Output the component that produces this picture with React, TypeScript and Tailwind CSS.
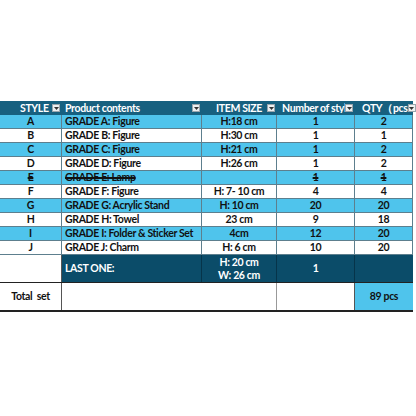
import React from "react";

const GRID = "grid grid-cols-[62px_140px_75px_78px_58px]";

function Drop() {
  return (
    <span className="ml-auto mr-[2px] flex h-[8px] w-[8px] shrink-0 items-center justify-center border border-[#9aa6ad] bg-[#eef0f1]">
      <svg width="5" height="3" viewBox="0 0 5 3">
        <path d="M0 0 L5 0 L2.5 3 Z" fill="#333" />
      </svg>
    </span>
  );
}

type Row = { s: string; p: string; i: string; n: string; q: string; blue: boolean; strike?: boolean };

const rows: Row[] = [
  { s: "A", p: "GRADE A: Figure", i: "H:18 cm", n: "1", q: "2", blue: true },
  { s: "B", p: "GRADE B: Figure", i: "H:30 cm", n: "1", q: "1", blue: false },
  { s: "C", p: "GRADE C: Figure", i: "H:21 cm", n: "1", q: "2", blue: true },
  { s: "D", p: "GRADE D: Figure", i: "H:26 cm", n: "1", q: "2", blue: false },
  { s: "E", p: "GRADE E: Lamp", i: "", n: "1", q: "1", blue: true, strike: true },
  { s: "F", p: "GRADE F: Figure", i: "H: 7- 10 cm", n: "4", q: "4", blue: false },
  { s: "G", p: "GRADE G: Acrylic Stand", i: "H: 10 cm", n: "20", q: "20", blue: true },
  { s: "H", p: "GRADE H: Towel", i: "23 cm", n: "9", q: "18", blue: false },
  { s: "I", p: "GRADE I: Folder & Sticker Set", i: "4cm", n: "12", q: "20", blue: true },
  { s: "J", p: "GRADE J: Charm", i: "H: 6 cm", n: "10", q: "20", blue: false },
];

export default function App() {
  const font = { fontFamily: "Lato, 'Liberation Sans', sans-serif" };
  return (
    <div className="h-[416px] w-[416px] bg-white pt-[101px]" style={font}>
      <div className="w-[413px] text-[10.5px] font-bold leading-none tracking-[-0.35px] text-[#111]">
        {/* header */}
        <div className={`${GRID} h-[14px] bg-[#17607f] text-white`}>
          <div className="flex items-center pl-[20px]">STYLE<Drop /></div>
          <div className="flex items-center pl-[3px]">Product contents<Drop /></div>
          <div className="flex items-center pl-[14px]">ITEM SIZE<Drop /></div>
          <div className="flex items-center overflow-hidden pl-[5px]"><span className="overflow-hidden whitespace-nowrap">Number of styl</span><Drop /></div>
          <div className="flex items-center pl-[7px] whitespace-nowrap">QTY（pcs<Drop /></div>
        </div>
        {rows.map((r) => {
          const bg = r.blue ? "bg-[#4fc4ec]" : "bg-white";
          const st = r.strike ? "line-through decoration-[1.5px]" : "";
          const cell = `flex items-center h-[14px] border-b border-[#5d7f8e] border-r ${bg}`;
          return (
            <div key={r.s} className={GRID}>
              <div className={`${cell} justify-center ${st}`}>{r.s}</div>
              <div className={`${cell} pl-[3px] ${st}`}>{r.p}</div>
              <div className={`${cell} justify-center`}>{r.i}</div>
              <div className={`${cell} justify-center ${st}`}>{r.n}</div>
              <div className={`${cell} justify-center ${st}`}>{r.q}</div>
            </div>
          );
        })}
        {/* last one */}
        <div className={`${GRID} h-[27px]`}>
          <div className="border-r border-[#555] bg-white" />
          <div className="flex items-center border-r border-[#06344a] bg-[#0b4c69] pl-[3px] text-white">LAST ONE:</div>
          <div className="flex flex-col items-center justify-center gap-[3px] border-r border-[#06344a] bg-[#0b4c69] text-white">
            <span>H: 20 cm</span>
            <span>W: 26 cm</span>
          </div>
          <div className="flex items-center justify-center border-r border-[#06344a] bg-[#0b4c69] text-white">1</div>
          <div className="bg-[#0b4c69]" />
        </div>
        {/* total */}
        <div className={`${GRID} h-[30px] border-y-2 border-t-[1px] border-[#222]`}>
          <div className="flex items-center justify-center whitespace-pre border-r border-[#555] bg-white">Total  set</div>
          <div className="col-span-2 border-r border-[#999] bg-white" />
          <div className="border-r border-[#555] bg-white" />
          <div className="flex items-center justify-center bg-[#4fc4ec]">89 pcs</div>
        </div>
      </div>
    </div>
  );
}
